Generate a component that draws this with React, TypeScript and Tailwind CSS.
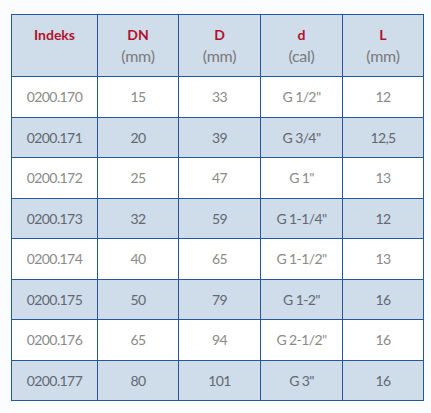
import React from "react";

const rows = [
  ["0200.170", "15", "33", "G 1/2\"", "12"],
  ["0200.171", "20", "39", "G 3/4\"", "12,5"],
  ["0200.172", "25", "47", "G 1\"", "13"],
  ["0200.173", "32", "59", "G 1-1/4\"", "12"],
  ["0200.174", "40", "65", "G 1-1/2\"", "13"],
  ["0200.175", "50", "79", "G 1-2\"", "16"],
  ["0200.176", "65", "94", "G 2-1/2\"", "16"],
  ["0200.177", "80", "101", "G 3\"", "16"],
];

const headers: [string, string][] = [
  ["Indeks", ""],
  ["DN", "(mm)"],
  ["D", "(mm)"],
  ["d", "(cal)"],
  ["L", "(mm)"],
];

const widths = ["w-[86px]", "w-[81px]", "w-[82px]", "w-[82px]", "w-[81px]"];

export default function App() {
  return (
    <div
      className="w-[431px] h-[413px] bg-[#fbfcfd] pt-[14px] pl-[11px]"
      style={{ fontFamily: "Lato, 'Open Sans', sans-serif" }}
    >
      <table className="border-collapse table-fixed w-[413px]">
        <thead>
          <tr className="h-[62px] bg-[#cfdcea]">
            {headers.map(([t, s], i) => (
              <th
                key={i}
                className={`${widths[i]} border border-[#24589a] align-top pt-[11px] font-normal`}
              >
                <div className="text-[14px] leading-[18px] font-bold text-[#b2122c]">{t}</div>
                {s && <div className="text-[16px] leading-[22px] text-[#7a7a7a] mt-[1px] tracking-[-0.3px]">{s}</div>}
              </th>
            ))}
          </tr>
        </thead>
        <tbody>
          {rows.map((r, ri) => (
            <tr key={ri} className={`h-[40.5px] ${ri % 2 === 1 ? "bg-[#cfdcea]" : "bg-white"}`}>
              {r.map((c, ci) => (
                <td
                  key={ci}
                  className={`border border-[#24589a] text-center text-[14px] tracking-[-0.6px] ${ri % 2 === 1 ? "text-[#636870]" : "text-[#8a8a8a]"}`}
                >
                  {c}
                </td>
              ))}
            </tr>
          ))}
        </tbody>
      </table>
    </div>
  );
}
